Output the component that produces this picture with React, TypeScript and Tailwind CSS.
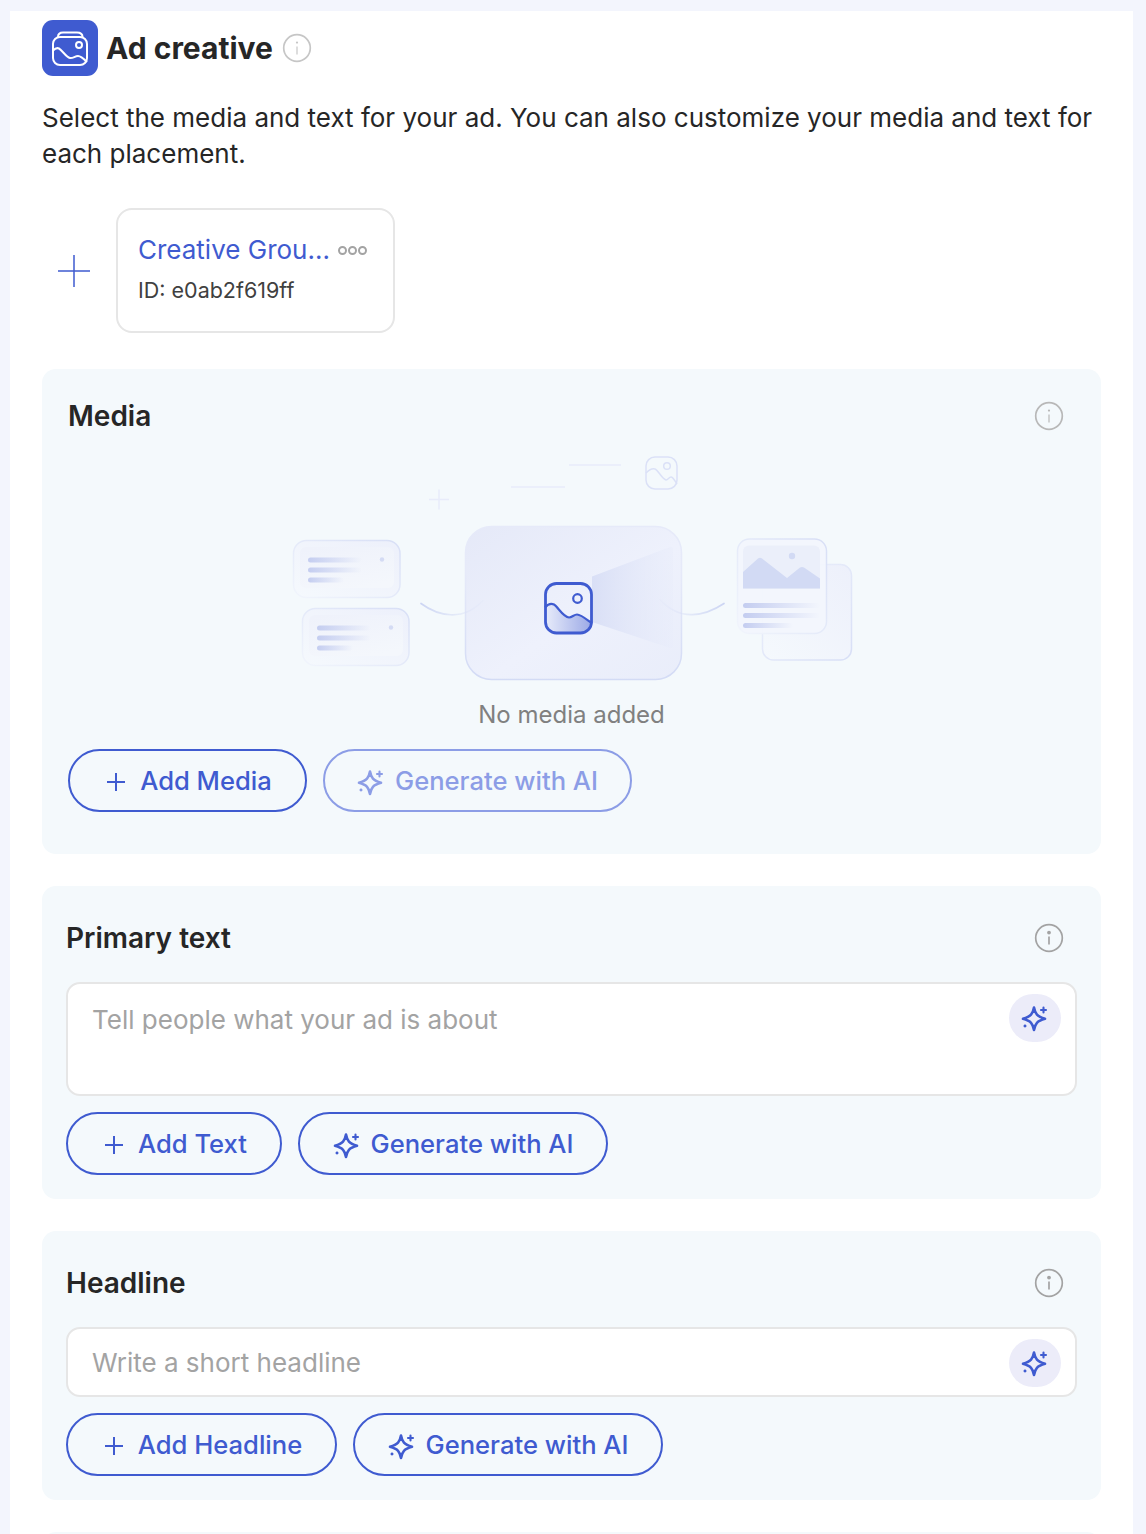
import React from "react";

const Sparkle = ({ className = "" }: { className?: string }) => (
  <svg viewBox="0 0 28 28" fill="none" className={className} stroke="currentColor" strokeWidth="2.600" strokeLinejoin="round" strokeLinecap="round">
    <path d="M13 3.500 C14.200 10 16 12.500 24 14.800 C16 17 14.200 19.500 13 26 C11.800 19.500 10 17 2 14.800 C10 12.500 11.800 10 13 3.500 Z" />
    <path d="M22.500 3.500v5M20 6h5" strokeWidth="2.100" />
    <path d="M4 21.800v0.400M3.800 22h0.400" strokeWidth="2.600" />
  </svg>
);

const Info = ({ tone = "light", className = "" }: { tone?: "light" | "mid" | "dark"; className?: string }) => {
  const c = tone === "dark" ? "#a3a3a3" : tone === "mid" ? "#b8b8b8" : "#c6c6c6";
  return (
    <svg viewBox="0 0 30 30" fill="none" className={className}>
      <circle cx="15" cy="15" r="13.3" stroke={c} strokeWidth="1.7" />
      <circle cx="15" cy="9.600" r={tone === "dark" ? 1.9 : 1.1} fill={c} />
      <path d="M15 13.500v8" stroke={c} strokeWidth={tone === "dark" ? 1.7 : 1.2} />
    </svg>
  );
};

const Plus = ({ className = "" }: { className?: string }) => (
  <svg viewBox="0 0 24 24" fill="none" className={className} stroke="currentColor" strokeWidth="2">
    <path d="M12 3v18M3 12h18" />
  </svg>
);

const Illustration = () => (
  <svg viewBox="0 0 570 230" fill="none" className="h-[230px] w-[570px]">
    <defs>
      <linearGradient id="card" x1="0" y1="1" x2="1" y2="0">
        <stop offset="0" stopColor="#f5f9fd" />
        <stop offset="1" stopColor="#edf0fb" />
      </linearGradient>
      <linearGradient id="bord" x1="0" y1="1" x2="1" y2="0">
        <stop offset="0" stopColor="#f1f5fc" />
        <stop offset="1" stopColor="#d8dff6" />
      </linearGradient>
      <linearGradient id="bord2" x1="0" y1="0" x2="1" y2="1">
        <stop offset="0" stopColor="#eef2fc" />
        <stop offset="1" stopColor="#d8dff6" />
      </linearGradient>
      <linearGradient id="inner" x1="0.2" y1="0" x2="0.6" y2="1">
        <stop offset="0" stopColor="#eff2fb" />
        <stop offset="1" stopColor="#f4f7fc" />
      </linearGradient>
      <linearGradient id="bar" x1="0" y1="0" x2="1" y2="0">
        <stop offset="0" stopColor="#c4cdf0" />
        <stop offset="1" stopColor="#c4cdf0" stopOpacity="0" />
      </linearGradient>
      <linearGradient id="big" x1="0" y1="0" x2="1" y2="1">
        <stop offset="0" stopColor="#e5e9f8" />
        <stop offset="0.55" stopColor="#eef1fc" />
        <stop offset="1" stopColor="#e9edfa" />
      </linearGradient>
      <linearGradient id="bigb" x1="0" y1="0" x2="0" y2="1">
        <stop offset="0.3" stopColor="#e6eaf9" />
        <stop offset="1" stopColor="#d3dbf5" />
      </linearGradient>
      <linearGradient id="beam" x1="0" y1="0" x2="1" y2="0">
        <stop offset="0" stopColor="#d9dff6" />
        <stop offset="1" stopColor="#e8ecfa" stopOpacity="0.4" />
      </linearGradient>
      <linearGradient id="pic" x1="257" y1="0" x2="304" y2="0" gradientUnits="userSpaceOnUse">
        <stop offset="0" stopColor="#e8ecfa" />
        <stop offset="1" stopColor="#9aa8e6" />
      </linearGradient>
      <linearGradient id="curveL" x1="133" y1="0" x2="195" y2="0" gradientUnits="userSpaceOnUse">
        <stop offset="0" stopColor="#ccd5f3" />
        <stop offset="1" stopColor="#dde3f7" stopOpacity="0.2" />
      </linearGradient>
      <linearGradient id="curveR" x1="372" y1="0" x2="436" y2="0" gradientUnits="userSpaceOnUse">
        <stop offset="0" stopColor="#dde3f7" stopOpacity="0.2" />
        <stop offset="1" stopColor="#ccd5f3" />
      </linearGradient>
    </defs>

    <path d="M141 47.500h20M151 37.500v20" stroke="#e8ecfa" strokeWidth="1.500" />
    <path d="M223 35h54M281 13h52" stroke="#e8ecfa" strokeWidth="1.600" />
    <g stroke="#dbe1f7" strokeWidth="1.500">
      <rect x="358" y="5" width="31" height="32" rx="9" />
      <circle cx="379" cy="14" r="3.300" />
      <path d="M358 21C361 18 364 16 367 17C370 18 374 27 378 28C380 28 381 25 383 25C385 25 387 29 389 32" />
    </g>

    <rect x="5.500" y="88.500" width="106.500" height="57" rx="13" fill="url(#card)" stroke="url(#bord)" strokeWidth="1.500" />
    <rect x="12" y="95" width="94" height="41" rx="6" fill="url(#inner)" />
    <rect x="20" y="105.500" width="54" height="5" rx="2.500" fill="url(#bar)" />
    <rect x="20" y="115.500" width="54" height="5" rx="2.500" fill="url(#bar)" />
    <rect x="20" y="125.500" width="36" height="5" rx="2.500" fill="url(#bar)" />
    <circle cx="94" cy="107.500" r="2.200" fill="#d4dbf4" />

    <rect x="14.500" y="156.500" width="106.500" height="57" rx="13" fill="url(#card)" stroke="url(#bord)" strokeWidth="1.500" />
    <rect x="21" y="163" width="94" height="41" rx="6" fill="url(#inner)" />
    <rect x="29" y="173.500" width="54" height="5" rx="2.500" fill="url(#bar)" />
    <rect x="29" y="183.500" width="54" height="5" rx="2.500" fill="url(#bar)" />
    <rect x="29" y="193.500" width="36" height="5" rx="2.500" fill="url(#bar)" />
    <circle cx="103" cy="175.500" r="2.200" fill="#d4dbf4" />

    <rect x="177.500" y="74.500" width="216" height="153" rx="26" fill="url(#big)" stroke="url(#bigb)" strokeWidth="1.500" />
    <path d="M304 124.500L382 95Q385 94 385 97V194Q385 197 382 196L304 170Z" fill="url(#beam)" />
    <path d="M133 151.500C150 164 175 170 195 148.500" stroke="url(#curveL)" strokeWidth="1.700" strokeLinecap="round" />
    <path d="M372 147.500C392 170 417 164 436 151.500" stroke="url(#curveR)" strokeWidth="1.700" strokeLinecap="round" />

    <path d="M257 155.500C260 152 263 151 266 152.500C270 155 275 165 281 165.500C284 165.500 286 162.500 289 162.500C293 162.500 298 167 304 171.500V172a9 9 0 0 1-9 9H266a9 9 0 0 1-9-9Z" fill="url(#pic)" />
    <g stroke="#3f5bd0" strokeWidth="2.800">
      <rect x="257.500" y="131.500" width="46" height="49.500" rx="11" />
      <circle cx="289.500" cy="146.500" r="4.300" strokeWidth="2.200" />
      <path d="M257 155.500C260 152 263 151 266 152.500C270 155 275 165 281 165.500C284 165.500 286 162.500 289 162.500C293 162.500 298 167 304 171.500" strokeWidth="2.200" />
    </g>

    <rect x="474.500" y="112.500" width="89" height="95.500" rx="11" fill="url(#card)" stroke="url(#bord2)" strokeWidth="1.500" />
    <rect x="449.500" y="87" width="89" height="94.500" rx="12" fill="#f2f5fd" fillOpacity="0.95" stroke="url(#bord)" strokeWidth="1.500" />
    <path d="M455 99.500a6 6 0 0 1 6-6h65a6 6 0 0 1 6 6V136.500H455Z" fill="#ebeffa" />
    <path d="M455 136.500V120L470 106.500Q472 105 474 106.500L499 126L512 115.500Q514 114.500 516 115.500L532 126.500V136.500Z" fill="#d2daf4" />
    <circle cx="504" cy="104" r="3.200" fill="#d2daf4" />
    <rect x="455" y="151" width="77" height="5" rx="2.500" fill="url(#bar)" />
    <rect x="455" y="161" width="77" height="5" rx="2.500" fill="url(#bar)" />
    <rect x="455" y="171" width="50" height="5" rx="2.500" fill="url(#bar)" />
  </svg>
);

const Btn = ({ icon, label, w, faded = false }: { icon: "plus" | "spark"; label: string; w: string; faded?: boolean }) => (
  <button
    className={`flex h-[63px] ${w} items-center justify-center rounded-full border-2 pt-[2px] text-[25.6px] font-medium ${
      faded ? "border-[#8c9de6] text-[#8c9de6]" : "border-[#3f5bd0] text-[#3f5bd0]"
    } ${icon === "plus" ? "gap-[12px]" : "gap-[10px]"}`}
  >
    {icon === "plus" ? <Plus className="ml-[1px] h-[24px] w-[24px]" /> : <Sparkle className="h-[28px] w-[28px]" />}
    <span>{label}</span>
  </button>
);

const Field = ({ placeholder, tall = false }: { placeholder: string; tall?: boolean }) => (
  <div
    className={`relative mt-[24px] w-[1011px] rounded-[14px] border-2 border-[#e6e6e6] bg-white pl-[24px] ${
      tall ? "h-[114px] pt-[18px]" : "flex h-[70px] items-center pt-[2px]"
    }`}
  >
    <span className="text-[26px] leading-[36px] text-[#a3a3a3]">{placeholder}</span>
    <span className="absolute right-[14px] top-[10px] flex h-[48px] w-[52px] items-center justify-center rounded-full bg-[#ececf9] text-[#3f5bd0]">
      <Sparkle className="h-[28px] w-[28px]" />
    </span>
  </div>
);

export default function App() {
  return (
    <div className="h-[1534px] overflow-hidden bg-[#f3f5fd] pl-[10px] pr-[13px] pt-[11px] font-['Inter',sans-serif] text-[#262626]">
      <div className="h-[1523px] bg-white pl-[32px] pr-[32px] pt-[9px]">
        <div className="flex items-center">
          <div className="flex h-[56px] w-[56px] items-center justify-center rounded-[11px] bg-[#3f5bd0]">
            <svg viewBox="0 0 38 38" fill="none" className="h-[38px] w-[38px]" stroke="white" strokeWidth="2">
              <rect x="2" y="8" width="34" height="28" rx="7" />
              <path d="M7 8C7 5 9 3.500 12 3.500H26C29 3.500 31.500 5 31.500 8" />
              <circle cx="28" cy="16" r="3" />
              <path d="M2 21.500C4 19.500 6 18.500 8 19.500C11 21 15 28 19 29C22 29.500 24 27 27 27C30 27 33 30 36 33" />
            </svg>
          </div>
          <h1 className="ml-[8px] text-[30px] font-bold leading-[40px]">Ad creative</h1>
          <Info className="ml-[9px] h-[30px] w-[30px]" />
        </div>

        <p className="mt-[24px] text-[26px] leading-[36px] text-[#262626]">
          Select the media and text for your ad. You can also customize your media and text for each placement.
        </p>

        <div className="mt-[36px] flex items-center">
          <svg viewBox="0 0 32 32" fill="none" stroke="#3f5bd0" strokeWidth="1.500" className="ml-[16px] h-[32px] w-[32px]">
            <path d="M16 0v32M0 16h32" />
          </svg>
          <div className="ml-[26px] h-[125px] w-[279px] rounded-[16px] border-2 border-[#e6e6e6] pl-[20px] pt-[22px]">
            <div className="flex items-center">
              <span className="text-[26px] leading-[36px] text-[#3f5bd0]">Creative Grou...</span>
              <span className="ml-[8px] flex gap-[1px]">
                <i className="h-[9px] w-[9px] rounded-full border-2 border-[#a3a3a3]" />
                <i className="h-[9px] w-[9px] rounded-full border-2 border-[#a3a3a3]" />
                <i className="h-[9px] w-[9px] rounded-full border-2 border-[#a3a3a3]" />
              </span>
            </div>
            <div className="mt-[7px] text-[21.5px] leading-[30px] text-[#404040]">ID: e0ab2f619ff</div>
          </div>
        </div>

        <section className="mt-[36px] h-[485px] w-[1059px] rounded-[14px] bg-[#f4f9fc] pl-[26px] pt-[27px]">
          <div className="flex h-[40px] items-center justify-between pr-[37px]">
            <h2 className="text-[28px] font-semibold">Media</h2>
            <Info tone="mid" className="h-[30px] w-[30px]" />
          </div>
          <div className="ml-[220px] mt-[16px] h-[230px]">
            <Illustration />
          </div>
          <div className="ml-[-26px] mt-[16px] text-center text-[24px] leading-[34px] text-[#808080]">No media added</div>
          <div className="mt-[17px] flex gap-[16px]">
            <Btn icon="plus" label="Add Media" w="w-[239px]" />
            <Btn icon="spark" label="Generate with AI" w="w-[309px]" faded />
          </div>
        </section>

        <section className="mt-[32px] h-[313px] w-[1059px] rounded-[14px] bg-[#f4f9fc] pl-[24px] pt-[32px]">
          <div className="flex h-[40px] items-center justify-between pr-[37px]">
            <h2 className="text-[28px] font-semibold">Primary text</h2>
            <Info tone="dark" className="h-[30px] w-[30px]" />
          </div>
          <Field placeholder="Tell people what your ad is about" tall />
          <div className="mt-[16px] flex gap-[16px]">
            <Btn icon="plus" label="Add Text" w="w-[216px]" />
            <Btn icon="spark" label="Generate with AI" w="w-[310px]" />
          </div>
        </section>

        <section className="mt-[32px] h-[269px] w-[1059px] rounded-[14px] bg-[#f4f9fc] pl-[24px] pt-[32px]">
          <div className="flex h-[40px] items-center justify-between pr-[37px]">
            <h2 className="text-[28px] font-semibold">Headline</h2>
            <Info tone="dark" className="h-[30px] w-[30px]" />
          </div>
          <Field placeholder="Write a short headline" />
          <div className="mt-[16px] flex gap-[16px]">
            <Btn icon="plus" label="Add Headline" w="w-[271px]" />
            <Btn icon="spark" label="Generate with AI" w="w-[310px]" />
          </div>
        </section>

        <section className="mt-[32px] h-[100px] w-[1059px] rounded-[14px] bg-[#f4f9fc]" />
      </div>
    </div>
  );
}
